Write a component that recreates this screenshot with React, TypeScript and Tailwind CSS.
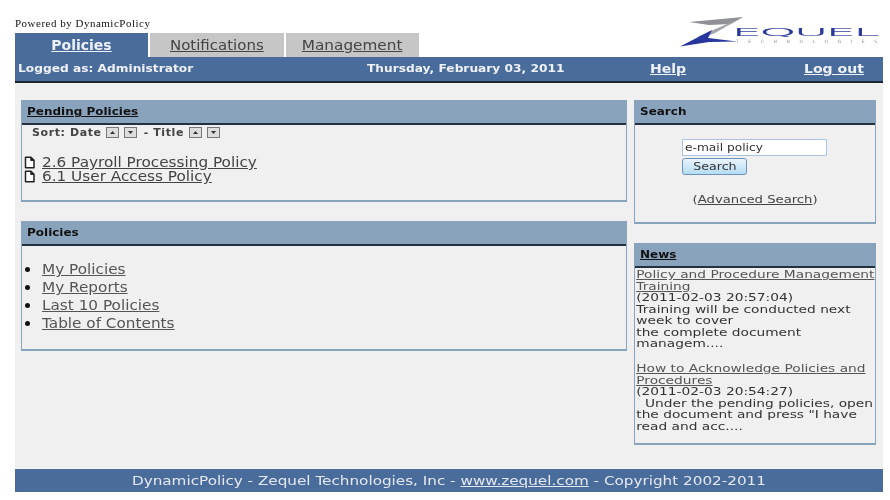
const font = { fontFamily: '"DejaVu Sans", Verdana, sans-serif' };

function Logo() {
  return (
    <svg width="200" height="32" viewBox="0 0 200 32" className="block">
      <path d="M10 6 L64 1 L52 8 L30 9 Z" fill="#8f9196" />
      <path d="M64 1 L36 17 L24 22 L18 21 L48 8 Z" fill="#a4a6ab" />
      <path d="M1 30.5 L33 14 L29 22 L58 25.5 L30 26 Z" fill="#26369c" />
      <text transform="translate(53 20) scale(4.25 1)" fontSize="11" letterSpacing="-0.5" fontWeight="200" fill="#2a3a9c" stroke="#2a3a9c" strokeWidth="0.7" fontFamily="DejaVu Sans" style={{ vectorEffect: 'non-scaling-stroke' }}>EQUEL</text>
      <text x="57" y="27" textLength="141" fontSize="4.5" fill="#8d8f96" fontFamily="DejaVu Sans">TECHNOLOGIES</text>
    </svg>
  );
}

function SortBtn({ up }: { up?: boolean }) {
  return (
    <span className="inline-flex w-[13px] h-[11px] border border-[#777] bg-[#ddd] items-center justify-center mr-[5px] mt-[1px]">
      <svg width="7" height="5" viewBox="0 0 7 5">
        <path d={up ? 'M3.5 1 L6 4 L1 4 Z' : 'M1 1 L6 1 L3.5 4 Z'} fill="#333" />
      </svg>
    </span>
  );
}

function PanelHead({ title, link }: { title: string; link?: boolean }) {
  return (
    <div className="h-[24px] bg-[#8aa3bd] border-b-2 border-[#22303f] pl-[5px] pt-[1px] flex items-center text-[11px] font-bold text-[#111]">
      <span className={`inline-block origin-left scale-x-[1.09] ${link ? 'underline' : ''}`}>{title}</span>
    </div>
  );
}

function DocIcon() {
  return (
    <svg width="11" height="13" viewBox="0 0 11 13" className="shrink-0">
      <path d="M1.5 1.2 H7 L10 4.2 V11.8 H1.5 Z M7 1.2 V4.2 H10" fill="#fff" stroke="#222" strokeWidth="1.5" strokeLinejoin="round" />
    </svg>
  );
}

const policies = ['My Policies', 'My Reports', 'Last 10 Policies', 'Table of Contents'];
const wide = 'inline-block origin-left scale-x-[1.09]';

export default function App() {
  return (
    <div className="w-[890px] h-[500px] bg-white overflow-hidden blur-[0.35px]" style={font}>
      <div className="ml-[15px] w-[868px]">
        <div className="h-[33px] relative">
          <div className="pt-[17px] text-[11px] leading-[12px] tracking-[0.5px] text-[#111] font-['Liberation_Serif',serif]">Powered by DynamicPolicy</div>
          <div className="absolute left-[664px] top-[16px]"><Logo /></div>
        </div>

        <div className="flex h-[24px] text-[14px] gap-[2px]">
          <div className="w-[133px] bg-[#4a6c9b] text-[#eef2f8] font-bold underline flex items-center justify-center">Policies</div>
          <div className="w-[134px] bg-[#c6c6c6] text-[#444] flex items-center justify-center"><span className="inline-block underline scale-x-[1.07]">Notifications</span></div>
          <div className="w-[133px] bg-[#c6c6c6] text-[#444] flex items-center justify-center"><span className="inline-block underline scale-x-[1.09]">Management</span></div>
        </div>

        <div className="h-[26px] bg-[#4a6c9b] border-b-[2px] border-[#1c2430] flex items-center text-[#eef2f8] font-bold text-[11px]">
          <div className="pl-[3px] w-[352px]"><span className="inline-block origin-left scale-x-[1.11]">Logged as: Administrator</span></div>
          <div className="w-[283px]"><span className="inline-block origin-left scale-x-[1.11]">Thursday, February 03, 2011</span></div>
          <div className="w-[154px] text-[13px]"><span className="inline-block origin-left scale-x-[1.08] underline">Help</span></div>
          <div className="text-[13px]"><span className="inline-block origin-left scale-x-[1.08] underline">Log out</span></div>
        </div>

        <div className="h-[386px] bg-[#f0f0f0] pt-[17px] px-[6px] flex gap-[7px] text-[#333]">
          <div className="w-[606px] flex flex-col gap-[19px]">
            <div className="h-[102px] border border-[#8aa3bd] border-b-2">
              <PanelHead title="Pending Policies" link />
              <div className="pl-[10px] pt-[1px] text-[11px] leading-[14px] tracking-[0.6px] font-semibold text-[#444] flex">
                <span className="mr-[4px]">Sort: Date</span><SortBtn up /><SortBtn />
                <span className="mr-[5px] ml-[2px]">- Title</span><SortBtn up /><SortBtn />
              </div>
              <div className="pt-[15px] text-[14px] leading-[14px] text-[#444]">
                <div className="flex items-center gap-[7px] pl-[2px] h-[14px]"><DocIcon /><span className={`${wide} underline`}>2.6 Payroll Processing Policy</span></div>
                <div className="flex items-center gap-[7px] pl-[2px] h-[14px]"><DocIcon /><span className={`${wide} underline`}>6.1 User Access Policy</span></div>
              </div>
            </div>

            <div className="h-[130px] border border-[#8aa3bd] border-b-2">
              <PanelHead title="Policies" />
              <ul className="pt-[14px] text-[14px] leading-[18px] text-[#555]">
                {policies.map(p => (
                  <li key={p} className="flex items-center">
                    <span className="w-[5px] h-[5px] rounded-full bg-[#111] ml-[3px] mr-[12px]" />
                    <span className={`${wide} underline`}>{p}</span>
                  </li>
                ))}
              </ul>
            </div>
          </div>

          <div className="w-[242px] flex flex-col gap-[19px]">
            <div className="h-[124px] border border-[#8aa3bd] border-b-2">
              <PanelHead title="Search" />
              <div className="pl-[47px] pt-[14px] text-[11px]">
                <div className="w-[145px] h-[17px] bg-white border border-[#a9c4e0] pl-[2px] leading-[15px] text-[#333]"><span className="inline-block origin-left scale-x-[1.11]">e-mail policy</span></div>
                <div className="mt-[2px] w-[65px] h-[17px] rounded-[3px] border border-[#6d93b8] bg-gradient-to-b from-[#eaf4fb] to-[#b5dcf3] text-center leading-[15px] text-[#333]"><span className="inline-block scale-x-[1.15]">Search</span></div>
              </div>
              <div className="pt-[18px] text-center text-[11px] leading-[14px] text-[#444]">
                <span className="inline-block scale-x-[1.2]">(<span className="underline">Advanced Search</span>)</span>
              </div>
            </div>

            <div className="h-[202px] border border-[#8aa3bd] border-b-2">
              <PanelHead title="News" link />
              <div className="pl-[1px] pt-[1px] w-[188px] origin-left scale-x-[1.25] text-[11px] leading-[11.5px] text-[#333] whitespace-nowrap">
                <div className="underline text-[#555]">Policy and Procedure Management<br />Training</div>
                <div>(2011-02-03 20:57:04)</div>
                <div>Training will be conducted next<br />week to cover<br />the complete document<br />managem....</div>
                <div className="h-[13.5px]" />
                <div className="underline text-[#555]">How to Acknowledge Policies and<br />Procedures</div>
                <div>(2011-02-03 20:54:27)</div>
                <div>&nbsp;&nbsp;Under the pending policies, open<br />the document and press "I have<br />read and acc....</div>
              </div>
            </div>
          </div>
        </div>

        <div className="h-[23px] bg-[#4a6c9b] text-[#e4e9f1] text-[13px] flex items-center justify-center">
          <span className="inline-block scale-x-[1.17] whitespace-nowrap">DynamicPolicy - Zequel Technologies, Inc - <span className="underline">www.zequel.com</span> - Copyright 2002-2011</span>
        </div>
      </div>
    </div>
  );
}
